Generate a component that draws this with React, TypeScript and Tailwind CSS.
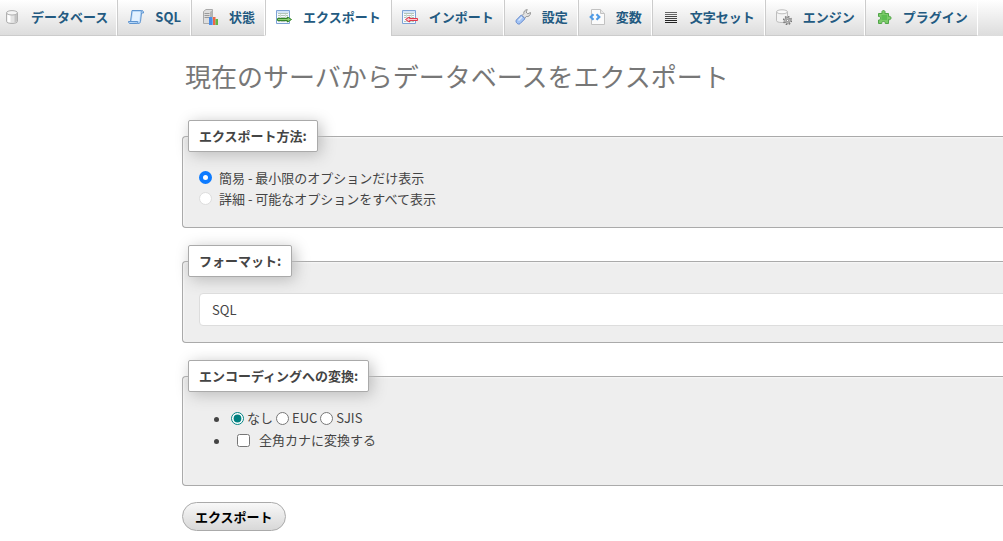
import type { ReactNode } from "react";
import clsx from "clsx";

const DatabaseIcon = () => (
  <svg className="size-4 shrink-0" viewBox="0 0 16 16" aria-hidden="true">
    <path d="M2.500 4v8.500c0 1.100 2.500 2 5.500 2s5.500-.9 5.500-2V4" fill="#e4e4e4" stroke="#b0b0b0" />
    <path d="M3.500 5v7.500c.5.500 1.500.9 3 1V6c-1.500-.1-2.500-.5-3-1z" fill="#fff" />
    <path d="M10.500 6v7.400c1.200-.2 2-.5 2.500-.9V5z" fill="#c4c4c4" />
    <ellipse cx="8" cy="3.800" rx="5.500" ry="2.200" fill="#f5f5f5" stroke="#b0b0b0" />
  </svg>
);

const SqlIcon = () => (
  <svg className="size-4 shrink-0" viewBox="0 0 16 16" aria-hidden="true">
    <path d="M4 1.500h9.500c1.500 0 2 .8 2 2.500h-2L12.500 12.500c-.2 1.300-.8 2-2 2H2c-1 0-1.500-.7-1.500-2h2z" fill="#b9d8f8" stroke="#5e94cf" />
    <path d="M5 3h7.300L11.300 12H3.800z" fill="#e3f1ff" />
    <path d="M.8 12.500h8.700c0 1 .3 1.700 1 2" fill="#a9cdf2" stroke="#5e94cf" />
    <path d="M13.200 3.500c0-1 .2-1.600.8-2" fill="none" stroke="#5e94cf" />
  </svg>
);

const StatusIcon = () => (
  <svg className="size-4 shrink-0" viewBox="0 0 16 16" aria-hidden="true">
    <path d="M1.500 2.500 4 .5h6.500v11l-2.500 3H1.500z" fill="#dedede" stroke="#aaa" />
    <path d="M8 3v11l2.500-2.500V1z" fill="#b5b5b5" />
    <path d="M2.500 4.500h5M2.500 6.500h5M2.500 8.500h5" stroke="#9a9a9a" />
    <path d="M7 8h3v8H7z" fill="#4b8de8" />
    <path d="M10 10h1.500v6H10z" fill="#77aef3" />
    <path d="M11 8h2.500v8H11z" fill="#ee6647" />
    <path d="M13.500 10H16v6h-2.500z" fill="#62b744" />
  </svg>
);

const SheetIcon = ({ children }: { children: ReactNode }) => (
  <svg className="size-4 shrink-0" viewBox="0 0 16 16" aria-hidden="true">
    <path d="M.5 1.500h13v13H.5z" fill="#f4f9ff" stroke="#7da2d6" />
    <path d="M1 2h12v2H1z" fill="#d3e4f6" />
    <path d="M2 4.500h10M2 6.500h10M2 8.500h10M2 12.500h10" stroke="#b3c6b9" />
    <path d="M4.500 5v8M9.500 5v8" stroke="#d2dfd5" />
    {children}
  </svg>
);

const ExportIcon = () => (
  <SheetIcon>
    <path d="M1.500 9.500h10V8l4 2.500-4 2.500v-1.500h-10z" fill="#8fd077" stroke="#34852a" />
  </SheetIcon>
);

const ImportIcon = () => (
  <SheetIcon>
    <path d="M15.500 9.500H7.500V8l-4 2.500 4 2.500v-1.500h8z" fill="#ffc9cf" stroke="#e03a4e" />
  </SheetIcon>
);

const SettingsIcon = () => (
  <svg className="size-4 shrink-0" viewBox="0 0 16 16" aria-hidden="true">
    <path d="m7 6.500 1.800-1.800C8.500 2.500 10 .8 12.300.6L11 3l1.800 1.800 2.700-1.300c.3 2.700-2 4.600-4.300 4L9.500 9.500z" fill="#e2e2e2" stroke="#959595" />
    <path d="M6.300 6 10 9.700l-5 5C3.200 16.200-.1 13 1.400 11z" fill="#a3c4f5" stroke="#6388cc" />
    <path d="m3.500 11.500 3.500-3.500" stroke="#dbe9ff" strokeWidth="1.500" />
  </svg>
);

const VariablesIcon = () => (
  <svg className="size-4 shrink-0" viewBox="0 0 16 16" aria-hidden="true">
    <path d="M2.500.5h9l4 4v11h-13z" fill="#fbfbfb" stroke="#c2c2c2" />
    <path d="M11.500.5v4h4" fill="#e8e8e8" stroke="#c2c2c2" />
    <path d="M4.500 5.200 1.700 8l2.800 2.800M7.500 5.200 10.300 8l-2.800 2.800" fill="none" stroke="#4f9be6" strokeWidth="2.200" />
  </svg>
);

const CharsetIcon = () => (
  <svg className="size-4 shrink-0" viewBox="0 0 16 16" aria-hidden="true">
    <path d="M2 3.500h12M2 5.500h12" stroke="#666" />
    <path d="M2 7.500h12M2 9.500h12" stroke="#444" />
    <path d="M2 11.500h12M2 13.500h12" stroke="#222" />
  </svg>
);

const EngineIcon = () => (
  <svg className="size-4 shrink-0" viewBox="0 0 16 16" aria-hidden="true">
    <path d="M.5 2.800v9c0 1 2.200 1.700 5.500 1.700s5.500-.7 5.500-1.700v-9" fill="#f3f3f3" stroke="#bdbdbd" />
    <ellipse cx="6" cy="2.800" rx="5.500" ry="2" fill="#fafafa" stroke="#bdbdbd" />
    <circle cx="11.500" cy="11.500" r="3.900" fill="none" stroke="#777" strokeWidth="1.500" strokeDasharray="1.600 1.460" />
    <circle cx="11.500" cy="11.500" r="2.800" fill="#ddd" stroke="#808080" />
    <circle cx="11.500" cy="11.500" r="1.200" fill="#fff" stroke="#777" />
  </svg>
);

const PluginIcon = () => (
  <svg className="size-4 shrink-0" viewBox="0 0 16 16" aria-hidden="true">
    <path
      d="M2.500 4.500h3.700C5.500 3 6 1.500 7.500 1.500S9.500 3 8.800 4.500h3.700v3c1.300-.5 2.500 0 2.500 1.500s-1.200 2-2.500 1.500v4H9.300c.3-1.200-.5-2-1.800-2s-2.100.8-1.800 2H2.500V11c1.200.3 2-.5 2-1.800s-.8-2-2-1.700z"
      fill="#7acb68"
      stroke="#51a548"
    />
    <path d="M5.500 6h5.500v5H5.500z" fill="#5dbe52" />
  </svg>
);

const tabs = [
  { label: "データベース", icon: DatabaseIcon },
  { label: "SQL", icon: SqlIcon },
  { label: "状態", icon: StatusIcon },
  { label: "エクスポート", icon: ExportIcon, active: true },
  { label: "インポート", icon: ImportIcon },
  { label: "設定", icon: SettingsIcon },
  { label: "変数", icon: VariablesIcon },
  { label: "文字セット", icon: CharsetIcon },
  { label: "エンジン", icon: EngineIcon },
  { label: "プラグイン", icon: PluginIcon },
];

const TopMenu = () => (
  <nav className="h-9 overflow-hidden bg-linear-to-b from-white to-[#dcdcdc]">
    <ul className="flex h-9">
      {tabs.map((tab) => (
        <li key={tab.label} className="shrink-0">
          <a
            href="#"
            className={clsx(
              "flex h-9 items-center gap-[11px] border-r border-b border-l border-r-white border-l-[#ccc] pr-[9px] pb-0.5 pl-2.5 font-bold text-[#235a81]",
              "in-[li:first-child]:border-l-0 in-[li:first-child]:pr-2 in-[li:first-child]:pl-1",
              tab.active ? "border-b-white bg-white" : "border-b-[#ccc]"
            )}
          >
            <tab.icon />
            {tab.label}
          </a>
        </li>
      ))}
    </ul>
  </nav>
);

const Panel = ({ title, className, children }: { title: string; className: string; children: ReactNode }) => (
  <fieldset
    className={clsx(
      "-mr-8 rounded-l border border-r-0 border-[#aaa] bg-[#eee] pr-4 pl-[5px] shadow-[inset_1px_1px_2px_#fff8]",
      className
    )}
  >
    <legend className="rounded-xs border border-[#aaa] bg-white px-2.5 py-[5px] leading-5 font-bold shadow-[3px_3px_15px_#bbb]">
      {title}
    </legend>
    <div className="pl-[11px]">{children}</div>
  </fieldset>
);

const methodRadio =
  "size-[13px] appearance-none rounded-full border border-[#ddd] bg-white checked:border-4 checked:border-[#0d7bff]";

const App = () => {
  return (
    <div className="overflow-hidden bg-white font-['Noto_Sans_CJK_JP',sans-serif] text-[13px] text-[#444]">
      <TopMenu />
      <main className="ml-[182px]">
        <h2 className="pt-5 pb-6 pl-[3px] text-[26px] leading-10 text-[#777]">
          現在のサーバからデータベースをエクスポート
        </h2>

        <form onSubmit={(e) => e.preventDefault()}>
          <Panel title="エクスポート方法:" className="mb-[17px] pt-[15px] pb-[18px]">
            <label className="flex items-center gap-[7px] leading-[21px]">
              <input type="radio" name="method" defaultChecked className={methodRadio} />
              簡易 - 最小限のオプションだけ表示
            </label>
            <label className="flex items-center gap-[7px] leading-[21px]">
              <input type="radio" name="method" className={methodRadio} />
              詳細 - 可能なオプションをすべて表示
            </label>
          </Panel>

          <Panel title="フォーマット:" className="mb-[17px] pt-4 pb-4">
            <select
              aria-label="フォーマット"
              className="block h-[33px] w-full appearance-none rounded border border-[#ddd] bg-white px-3 text-[13px]"
            >
              <option>SQL</option>
            </select>
          </Panel>

          <Panel title="エンコーディングへの変換:" className="mb-4 pt-[15px] pb-[34px]">
            <ul className="list-disc pl-8 leading-[22px]">
              <li>
                <div className="flex items-center gap-[3px]">
                  <label className="flex items-center gap-[3px]">
                    <input type="radio" name="encoding" defaultChecked className="size-[13px] accent-[#008080]" />
                    なし
                  </label>
                  <label className="flex items-center gap-[3px]">
                    <input type="radio" name="encoding" className="size-[13px] accent-[#008080]" />
                    EUC
                  </label>
                  <label className="flex items-center gap-[3px]">
                    <input type="radio" name="encoding" className="size-[13px] accent-[#008080]" />
                    SJIS
                  </label>
                </div>
              </li>
              <li>
                <label className="flex items-center gap-[9px] pl-1.5">
                  <input type="checkbox" className="size-[13px]" />
                  全角カナに変換する
                </label>
              </li>
            </ul>
          </Panel>

          <button
            type="submit"
            className="h-[29px] rounded-full border border-[#aaa] bg-linear-to-b from-[#f8f8f8] to-[#d8d8d8] px-3 font-bold text-black"
          >
            エクスポート
          </button>
        </form>
      </main>
    </div>
  );
};

export default App;
